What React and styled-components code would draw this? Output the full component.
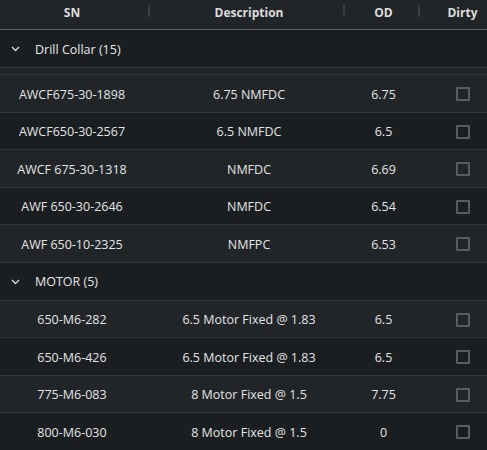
import React from "react";
import styled, { createGlobalStyle } from "styled-components";

const Global = createGlobalStyle`
  html, body { margin: 0; padding: 0; background: #1b1e20; }
  body { font-family: "Open Sans", "Noto Sans", sans-serif; overflow: hidden; }
`;

const COLS = "150px 195px 75px 85px";

const Grid = styled.div`
  width: 505px;
  height: 450px;
  overflow: hidden;
  background: #1b1e20;
  color: #e3e4e5;
  font-size: 12px;
`;

const Header = styled.div`
  display: grid;
  grid-template-columns: ${COLS};
  height: 24px;
  padding-bottom: 5px;
  background: #222528;
  border-bottom: 1px solid #5f6265;
`;

const HeadCell = styled.div`
  position: relative;
  display: flex;
  align-items: center;
  justify-content: center;
  font-weight: 700;
  color: #dcdddd;
  padding: ${(p) => p.$pad || "0"};
  ${(p) =>
    p.$sep &&
    `&::after {
      content: "";
      position: absolute;
      right: 0;
      top: 5px;
      width: 2px;
      height: 12px;
      background: #3b3e41;
    }`}
`;

const GroupRow = styled.div`
  display: flex;
  align-items: center;
  box-sizing: border-box;
  height: ${(p) => p.$h}px;
  padding-top: 1px;
  background: #1b1e20;
  border-bottom: 1px solid #32363a;
  padding-left: 11px;
  gap: 15px;
  font-size: 12.5px;
  color: #e6e7e8;
`;

const Band = styled.div`
  height: 6px;
  background: #222528;
  border-bottom: 1px solid #32363a;
`;

const Row = styled.div`
  display: grid;
  grid-template-columns: ${COLS};
  box-sizing: border-box;
  height: 37.5px;
  background: ${(p) => (p.$odd ? "#1b1e20" : "#222528")};
  border-bottom: 1px solid #32363a;
`;

const Cell = styled.div`
  display: flex;
  align-items: center;
  justify-content: center;
  padding: ${(p) => p.$pad || "0"};
  padding-top: 2px;
  white-space: nowrap;
  font-size: 12.5px;
`;

const Check = styled.span`
  width: 10px;
  height: 10px;
  border: 2px solid #595c5f;
  border-radius: 1px;
  display: block;
`;

const Chevron = () => (
  <svg width="9" height="6" viewBox="0 0 9 6" fill="none">
    <path d="M1 1l3.5 3.5L8 1" stroke="#d8d9da" strokeWidth="1.4" />
  </svg>
);

const PADS = ["0 6px 0 0", "0 0 0 3px", "0 0 0 2px", "0"];

const groups = [
  {
    name: "Drill Collar (15)",
    band: true,
    h: 38,
    rows: [
      ["AWCF675-30-1898", "6.75 NMFDC", "6.75"],
      ["AWCF650-30-2567", "6.5 NMFDC", "6.5"],
      ["AWCF 675-30-1318", "NMFDC", "6.69"],
      ["AWF 650-30-2646", "NMFDC", "6.54"],
      ["AWF 650-10-2325", "NMFPC", "6.53"],
    ],
  },
  {
    name: "MOTOR (5)",
    h: 38,
    rows: [
      ["650-M6-282", "6.5 Motor Fixed @ 1.83", "6.5"],
      ["650-M6-426", "6.5 Motor Fixed @ 1.83", "6.5"],
      ["775-M6-083", "8 Motor Fixed @ 1.5", "7.75"],
      ["800-M6-030", "8 Motor Fixed @ 1.5", "0"],
    ],
  },
];

export default function App() {
  return (
    <>
      <Global />
      <Grid>
        <Header>
          <HeadCell $sep $pad={PADS[0]}>SN</HeadCell>
          <HeadCell $sep $pad={PADS[1]}>Description</HeadCell>
          <HeadCell $sep $pad={PADS[2]}>OD</HeadCell>
          <HeadCell $pad={PADS[3]}>Dirty</HeadCell>
        </Header>
        {groups.map((g) => (
          <React.Fragment key={g.name}>
            <GroupRow $h={g.h}>
              <Chevron />
              <span>{g.name}</span>
            </GroupRow>
            {g.band && <Band />}
            {g.rows.map((r, i) => (
              <Row key={r[0]} $odd={i % 2 === 1}>
                <Cell $pad={PADS[0]}>{r[0]}</Cell>
                <Cell $pad={PADS[1]}>{r[1]}</Cell>
                <Cell $pad={PADS[2]}>{r[2]}</Cell>
                <Cell $pad={PADS[3]}>
                  <Check />
                </Cell>
              </Row>
            ))}
          </React.Fragment>
        ))}
      </Grid>
    </>
  );
}
